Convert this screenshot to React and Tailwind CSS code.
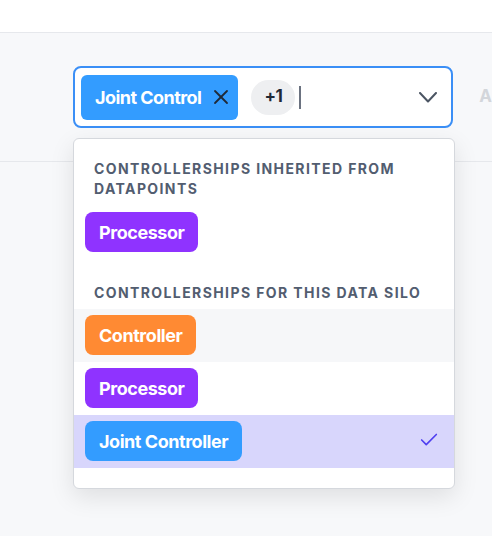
import React from "react";
import { X, Check } from "lucide-react";

const chipColors = {
  Controller: "bg-[#ff8a33]",
  Processor: "bg-[#8f33ff]",
  "Joint Controller": "bg-[#339cff]",
};

function Chip({ label }) {
  return (
    <span
      className={`inline-flex h-10 items-center rounded-lg px-[14px] text-[18px] font-bold tracking-[-0.025em] text-white ${chipColors[label]}`}
    >
      {label}
    </span>
  );
}

function SectionTitle({ children }) {
  return (
    <div className="px-5 text-[14px] font-bold uppercase leading-5 tracking-[0.1em] text-[#525d70]">
      {children}
    </div>
  );
}

const options = [
  { label: "Controller", hover: true },
  { label: "Processor" },
  { label: "Joint Controller", selected: true },
];

export default function App() {
  return (
    <div
      className="h-[536px] w-[492px] overflow-hidden bg-[#f7f8fa]"
      style={{ fontFamily: "Inter, 'Noto Sans', sans-serif" }}
    >
      {/* top bar */}
      <div className="h-[33px] border-b border-[#e6e8ec] bg-white" />

      {/* table row with select */}
      <div className="relative h-[129px] border-b border-[#e6e8ec]">
        <div className="flex items-center pl-[73px] pt-[33px]">
          <div className="flex h-[62px] w-[382px] items-center rounded-lg border-2 border-[#3b8ff6] bg-white pl-[6px] pr-[14px]">
            <span className="inline-flex h-[45px] items-center gap-[8px] rounded-md bg-[#339cff] pl-[14px] pr-[5px] text-[18px] font-bold tracking-[-0.03em] text-white">
              Joint Control
              <X size={24} strokeWidth={1.8} className="text-[#1f2937]" />
            </span>
            <span className="ml-[13px] inline-flex h-[35px] w-[44px] items-center justify-center rounded-full bg-[#eeeff1] text-[17px] font-bold tracking-[-0.03em] text-[#1f2937]">
              +1
            </span>
            <span className="ml-[4px] h-[23px] w-[2px] bg-[#6b7280]" />
            <svg width="18" height="11" viewBox="0 0 18 11" className="ml-auto text-[#4b5563]">
              <polyline points="1,1 9,9.5 17,1" fill="none" stroke="currentColor" strokeWidth="2" strokeLinecap="round" strokeLinejoin="round" />
            </svg>
          </div>
          <span className="ml-[26px] text-[17px] font-bold text-[#d3d6db]">A</span>
        </div>

        {/* dropdown menu */}
        <div className="absolute left-[73px] top-[105px] z-10 w-[382px] rounded-md border border-[#d5d8dd] bg-white pb-5 pt-5 shadow-[0_8px_24px_rgba(0,0,0,0.10)]">
          <SectionTitle>Controllerships inherited from datapoints</SectionTitle>
          <div className="mt-[13px] px-[11px]">
            <Chip label="Processor" />
          </div>
          <div className="mt-[31px] mb-[6px]">
            <SectionTitle>Controllerships for this data silo</SectionTitle>
          </div>
          {options.map((o) => (
            <div
              key={o.label}
              className={`flex h-[53px] items-start pl-[11px] pr-[14px] pt-[6px] ${
                o.selected ? "bg-[#d8d6fc]" : o.hover ? "bg-[#f6f7f9]" : "bg-white"
              }`}
            >
              <Chip label={o.label} />
              {o.selected && (
                <Check size={22} strokeWidth={1.8} className="ml-auto mt-[8px] text-[#4f3ff0]" />
              )}
            </div>
          ))}
        </div>
      </div>
    </div>
  );
}
